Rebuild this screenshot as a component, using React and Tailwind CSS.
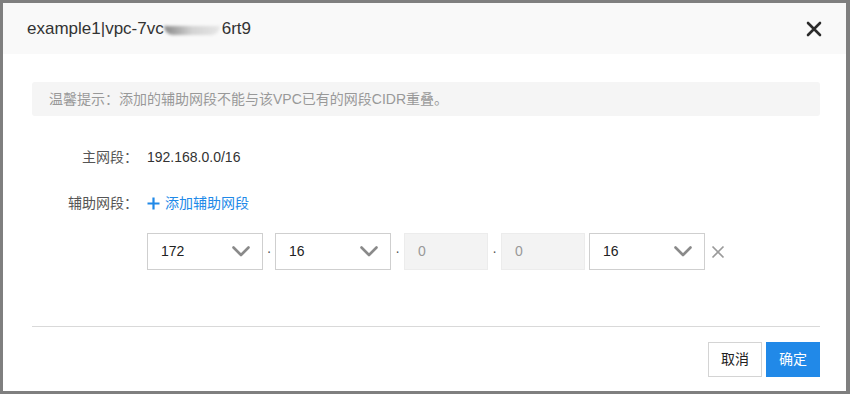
import React from 'react';

function Chevron() {
  return (
    <svg width="18" height="11" viewBox="0 0 18 11" fill="none">
      <path d="M1.5 1.5 L9 9 L16.5 1.5" stroke="#8a8a8a" strokeWidth="2.6" strokeLinecap="round" strokeLinejoin="round" />
    </svg>
  );
}

function SelectBox({ value }) {
  return (
    <div className="flex h-[37px] w-[116px] items-center justify-between border border-[#cfcfcf] bg-white pl-[13px] pr-[12px] text-[14px] text-[#222]">
      <span>{value}</span>
      <Chevron />
    </div>
  );
}

function DisabledBox({ value }) {
  return (
    <div className="flex h-[37px] w-[84px] items-center border border-[#ececec] bg-[#f3f3f3] pl-[13px] text-[14px] text-[#999]">
      {value}
    </div>
  );
}

function Dot({ w = 'w-[13px]' }) {
  return <span className={`flex ${w} justify-center text-[14px] text-[#555]`}>·</span>;
}

export default function App() {
  return (
    <div
      className="h-[394px] w-[850px] overflow-hidden bg-[#7f7f7f] pl-[3px] pt-[3px]"
      style={{ fontFamily: '"Liberation Sans", "Noto Sans CJK SC", sans-serif' }}
    >
      <div className="flex h-[388px] w-[843px] flex-col bg-white">
        {/* header */}
        <div className="flex h-[51px] items-center justify-between bg-[#f9f9f9] pl-[24px] pr-[24px]">
          <div className="flex items-center text-[17px] text-[#333]">
            <span>example1|vpc-7vc</span>
            <span className="relative inline-block h-[12px] w-[58px]">
              <span className="absolute left-0 top-[3px] h-[9px] w-[56px] rounded-b-full bg-gradient-to-r from-[#8a8a8a] via-[#d3d3d3] to-[#e6e6e6] blur-[1.5px]" />
            </span>
            <span>6rt9</span>
          </div>
          <svg width="16" height="16" viewBox="0 0 16 16" fill="none">
            <path d="M2 2 L14 14 M14 2 L2 14" stroke="#2b2b2b" strokeWidth="2.6" strokeLinecap="round" />
          </svg>
        </div>

        {/* body */}
        <div className="flex flex-1 flex-col pl-[29px] pr-[26px]">
          <div className="mt-[28px] flex h-[34px] items-center rounded-[3px] bg-[#f5f5f5] pl-[17px] text-[14px] text-[#999]">
            温馨提示：添加的辅助网段不能与该VPC已有的网段CIDR重叠。
          </div>

          <div className="mt-[31px] flex h-[20px] items-center text-[14px]">
            <span className="w-[106px] text-right text-[#555]">主网段：</span>
            <span className="ml-[9px] text-[#333]">192.168.0.0/16</span>
          </div>

          <div className="mt-[26px] flex h-[20px] items-center text-[14px]">
            <span className="w-[106px] text-right text-[#555]">辅助网段：</span>
            <span className="ml-[9px] flex items-center text-[#2189e8]">
              <svg width="13" height="13" viewBox="0 0 13 13" className="mr-[5px]">
                <path d="M6.5 0.5 V12.5 M0.5 6.5 H12.5" stroke="#2189e8" strokeWidth="2.2" />
              </svg>
              添加辅助网段
            </span>
          </div>

          <div className="ml-[115px] mt-[20px] flex items-center">
            <SelectBox value="172" />
            <Dot w="w-[12px]" />
            <SelectBox value="16" />
            <Dot />
            <DisabledBox value="0" />
            <Dot />
            <DisabledBox value="0" />
            <div className="ml-[4px]">
              <SelectBox value="16" />
            </div>
            <svg width="14" height="14" viewBox="0 0 14 14" className="ml-[6px]" fill="none">
              <path d="M1.5 1.5 L12.5 12.5 M12.5 1.5 L1.5 12.5" stroke="#9a9a9a" strokeWidth="1.7" />
            </svg>
          </div>

          <div className="mt-[56px] h-[1px] bg-[#d9d9d9]" />

          <div className="mt-[15px] flex justify-end gap-[4px]">
            <button className="h-[35px] w-[54px] border border-[#d4d4d4] bg-white text-[14px] text-[#222]">取消</button>
            <button className="h-[35px] w-[54px] bg-[#2189e8] text-[14px] text-white">确定</button>
          </div>
        </div>
      </div>
    </div>
  );
}
